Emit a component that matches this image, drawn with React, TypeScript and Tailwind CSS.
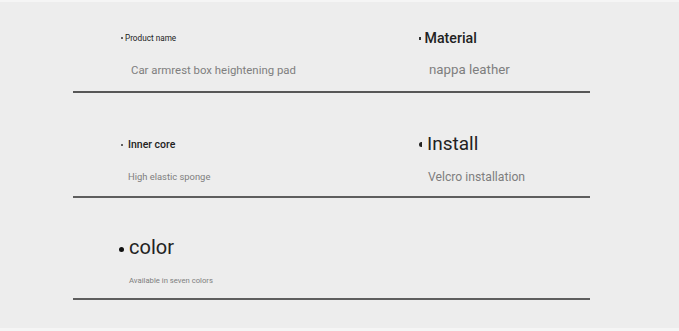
const font = { fontFamily: "Roboto, 'Liberation Sans', sans-serif" };

const Cell = ({
  label,
  desc,
  labelClass,
  descClass,
  bullet,
  labelPad,
  descPad,
}: {
  label: string;
  desc: string;
  labelClass: string;
  descClass: string;
  bullet: React.ReactNode;
  labelPad: string;
  descPad: string;
}) => (
  <div className="flex flex-col">
    <div className={`h-5 flex items-center ${labelPad}`}>
      {bullet}
      <span className={`leading-none text-[#222] ${labelClass}`}>{label}</span>
    </div>
    <div className={`h-4 flex items-center ${descPad}`}>
      <span className={`leading-none text-[#7e7e7e] ${descClass}`}>{desc}</span>
    </div>
  </div>
);

export default function App() {
  return (
    <div className="w-[679px] h-[331px] flex flex-col bg-[#ededed]" style={font}>
      <div className="h-[2px] bg-[#f5f5f5]" />
      <div className="flex-1 pl-[73px]">
        <div className="w-[517px]">
          {/* row 1 */}
          <div className="flex pt-[26px] pb-[12px] border-b-2 border-[#575757]">
            <div className="w-[346px] pl-[48px]">
              <div className="flex flex-col">
                <div className="h-5 flex items-center">
                  <span className="w-[2px] h-[2px] rounded-full bg-[#333] mr-[2px]" />
                  <span className="leading-none text-[#222] text-[8.2px]">Product name</span>
                </div>
                <div className="h-4 flex items-center mt-[15px] pl-[10px]">
                  <span className="leading-none text-[#7e7e7e] text-[11.4px]">Car armrest box heightening pad</span>
                </div>
              </div>
            </div>
            <div>
              <Cell
                label="Material"
                desc="nappa leather"
                labelPad=""
                descPad="mt-[14px] pl-[10px]"
                labelClass="text-[14.2px] font-medium"
                descClass="text-[13.3px]"
                bullet={<span className="w-[1.5px] h-[3px] bg-[#333] mr-[4px]" />}
              />
            </div>
          </div>
          {/* row 2 */}
          <div className="flex pt-[42px] pb-[11px] border-b-2 border-[#5e5e5e]">
            <div className="w-[346px] pl-[48px]">
              <Cell
                label="Inner core"
                desc="High elastic sponge"
                labelPad=""
                descPad="mt-[14px] pl-[7px]"
                labelClass="text-[10.5px] font-medium"
                descClass="text-[9.4px]"
                bullet={<span className="w-[2px] h-[2px] rounded-full bg-[#333] mr-[5px]" />}
              />
            </div>
            <div>
              <div className="flex flex-col">
                <div className="h-5 flex items-center -mt-[2px]">
                  <span className="w-[3px] h-[5px] rounded-l-full bg-[#222] mr-[5px] mt-[2px]" />
                  <span className="leading-none text-[#222] text-[19px]">Install</span>
                </div>
                <div className="h-4 flex items-center mt-[16px] pl-[9px]">
                  <span className="leading-none text-[#7e7e7e] text-[12.2px]">Velcro installation</span>
                </div>
              </div>
            </div>
          </div>
          {/* row 3 */}
          <div className="flex pt-[39px] pb-[9px] border-b-2 border-[#5e5e5e]">
            <div className="w-[346px] pl-[46px]">
              <div className="flex flex-col">
                <div className="h-5 flex items-center">
                  <span className="w-[5px] h-[5px] rounded-full bg-[#111] mr-[5px] mt-[5px]" />
                  <span className="leading-none text-[#222] text-[20px]">color</span>
                </div>
                <div className="h-4 flex items-center mt-[16px] pl-[10px]">
                  <span className="leading-none text-[#7e7e7e] text-[7.7px]">Available in seven colors</span>
                </div>
              </div>
            </div>
          </div>
        </div>
      </div>
      <div className="h-[3px] bg-[#f5f5f5]" />
    </div>
  );
}
